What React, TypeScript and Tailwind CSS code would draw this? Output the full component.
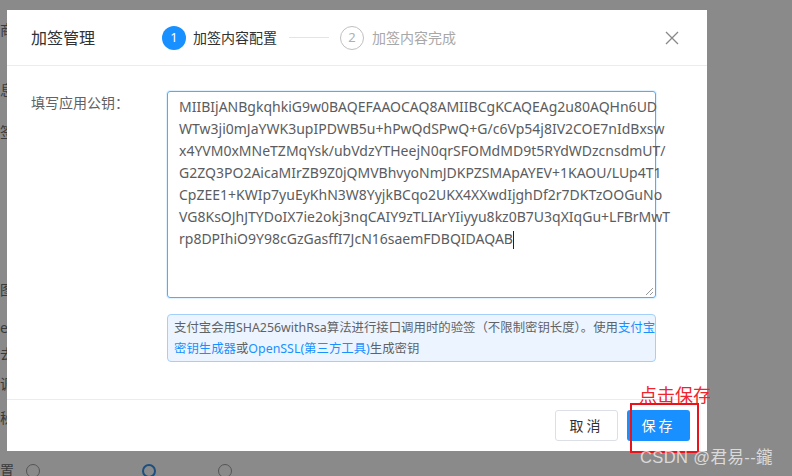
import React from 'react';

const keyLines = [
  'MIIBIjANBgkqhkiG9w0BAQEFAAOCAQ8AMIIBCgKCAQEAg2u80AQHn6UD',
  'WTw3ji0mJaYWK3upIPDWB5u+hPwQdSPwQ+G/c6Vp54j8IV2COE7nIdBxsw',
  'x4YVM0xMNeTZMqYsk/ubVdzYTHeejN0qrSFOMdMD9t5RYdWDzcnsdmUT/',
  'G2ZQ3PO2AicaMIrZB9Z0jQMVBhvyoNmJDKPZSMApAYEV+1KAOU/LUp4T1',
  'CpZEE1+KWIp7yuEyKhN3W8YyjkBCqo2UKX4XXwdIjghDf2r7DKTzOOGuNo',
  'VG8KsOJhJTYDoIX7ie2okj3nqCAIY9zTLIArYIiyyu8kz0B7U3qXIqGu+LFBrMwT',
  'rp8DPIhiO9Y98cGzGasffI7JcN16saemFDBQIDAQAB',
];

const font = { fontFamily: '"Segoe UI", "Noto Sans", "Noto Sans CJK SC", sans-serif' };

const App: React.FC = () => {
  return (
    <div className="relative w-[792px] h-[476px] overflow-hidden bg-[#8a8a8a]" style={font}>
      {/* underlying page, dimmed */}
      <div className="absolute left-0 top-0 w-[7px] h-[451px] overflow-hidden text-[14px] text-[#3a3a3a] leading-[16px]">
        <div className="flex flex-col">
          <span className="mt-[22px]">商</span>
          <span className="mt-[44px]">息</span>
          <span className="mt-[26px]">签</span>
          <span className="mt-[142px]">图</span>
          <span className="mt-[22px]">e</span>
          <span className="mt-[10px]">去</span>
          <span className="mt-[14px]">调</span>
          <span className="mt-[18px]">秘</span>
        </div>
      </div>
      <div className="absolute left-0 top-[463px] w-[300px] h-[13px] overflow-hidden">
        <div className="flex items-start">
          <span className="text-[14px] leading-[16px] text-[#3a3a3a] w-[14px] overflow-hidden">置</span>
          <span className="ml-[12px] mt-[1px] w-[14px] h-[14px] rounded-full border border-[#555]"></span>
          <span className="ml-[102px] mt-[1px] w-[14px] h-[14px] rounded-full border-2 border-[#1a4f80]"></span>
          <span className="ml-[62px] mt-[1px] w-[14px] h-[14px] rounded-full border border-[#555]"></span>
        </div>
      </div>

      {/* dialog */}
      <div className="absolute left-[7px] top-[10px] w-[700px] h-[441px] bg-white flex flex-col">
        <div className="h-[56px] flex items-center px-[24px] border-b border-[#ececec]">
          <span className="text-[16px] text-[#303133]">加签管理</span>
          <div className="ml-[67px] flex items-center">
            <span className="w-[24px] h-[24px] rounded-full bg-[#1890ff] text-white text-[13px] flex items-center justify-center">1</span>
            <span className="ml-[7px] text-[14px] text-[#303133]">加签内容配置</span>
            <span className="ml-[12px] w-[40px] h-px bg-[#e4e4e4]"></span>
            <span className="ml-[11px] w-[24px] h-[24px] rounded-full border border-[#c0c0c0] text-[#b0b0b0] text-[13px] flex items-center justify-center">2</span>
            <span className="ml-[8px] text-[14px] text-[#a8a8a8]">加签内容完成</span>
          </div>
          <svg className="ml-auto mr-[3px]" width="16" height="16" viewBox="0 0 16 16" fill="none" stroke="#888" strokeWidth="1.3">
            <path d="M2 2 L14 14 M14 2 L2 14" />
          </svg>
        </div>

        <div className="flex-1 flex px-[24px] pt-[25px]">
          <div className="w-[136px] text-[14px] text-[#606266] leading-[22px] pt-[1px]">填写应用公钥：</div>
          <div className="flex flex-col">
            <div className="w-[489px] h-[207px] border border-[#5aa9f5] rounded-[3px] shadow-[0_0_0_1px_rgba(24,144,255,0.12)] px-[11px] pt-[4px] text-[14px] leading-[22px] text-[#5a5c60] relative">
              {keyLines.map((l, i) => (
                <div key={i} className="whitespace-nowrap">
                  {l}
                  {i === keyLines.length - 1 && <span className="inline-block w-px h-[18px] bg-[#222] align-middle"></span>}
                </div>
              ))}
              <svg className="absolute right-[2px] bottom-[2px]" width="7" height="7" viewBox="0 0 7 7" stroke="#999" strokeWidth="1">
                <path d="M7 0 L0 7 M7 4 L4 7" />
              </svg>
            </div>
            <div className="mt-[16px] w-[489px] h-[48px] bg-[#ecf5ff] border border-[#a3cffb] rounded-[4px] px-[6px] pt-[2px] text-[12.4px] leading-[21px] text-[#606266] whitespace-nowrap">
              <div>
                支付宝会用SHA256withRsa算法进行接口调用时的验签（不限制密钥长度）。使用<span className="text-[#1890ff]">支付宝</span>
              </div>
              <div>
                <span className="text-[#1890ff]">密钥生成器</span>或<span className="text-[#1890ff]">OpenSSL(第三方工具)</span>生成密钥
              </div>
            </div>
          </div>
        </div>

        <div className="h-[52px] border-t border-[#ececec] flex items-start justify-end pt-[10px] pr-[17px] gap-[9px]">
          <button className="w-[63px] h-[31px] border border-[#dcdfe6] rounded-[3px] text-[14px] text-[#303133] tracking-[3px] bg-white">取消</button>
          <button className="w-[63px] h-[31px] rounded-[3px] text-[14px] text-white tracking-[3px] bg-[#1890ff]">保存</button>
        </div>
      </div>

      {/* annotation */}
      <div className="absolute left-[639px] top-[384px] text-[18px] leading-[22px] text-[#f0242a]">点击保存</div>
      <div className="absolute left-[630px] top-[403px] w-[69px] h-[50px] border-2 border-[#e8141c]"></div>

      {/* watermark */}
      <div className="absolute left-[640px] top-[447px] text-[16.5px] tracking-[0.4px] text-white/70 leading-[21px]" style={{ fontFamily: '"Liberation Sans", "Noto Sans CJK SC", sans-serif' }}>
        CSDN @君易--鑨
      </div>
    </div>
  );
};

export default App;
